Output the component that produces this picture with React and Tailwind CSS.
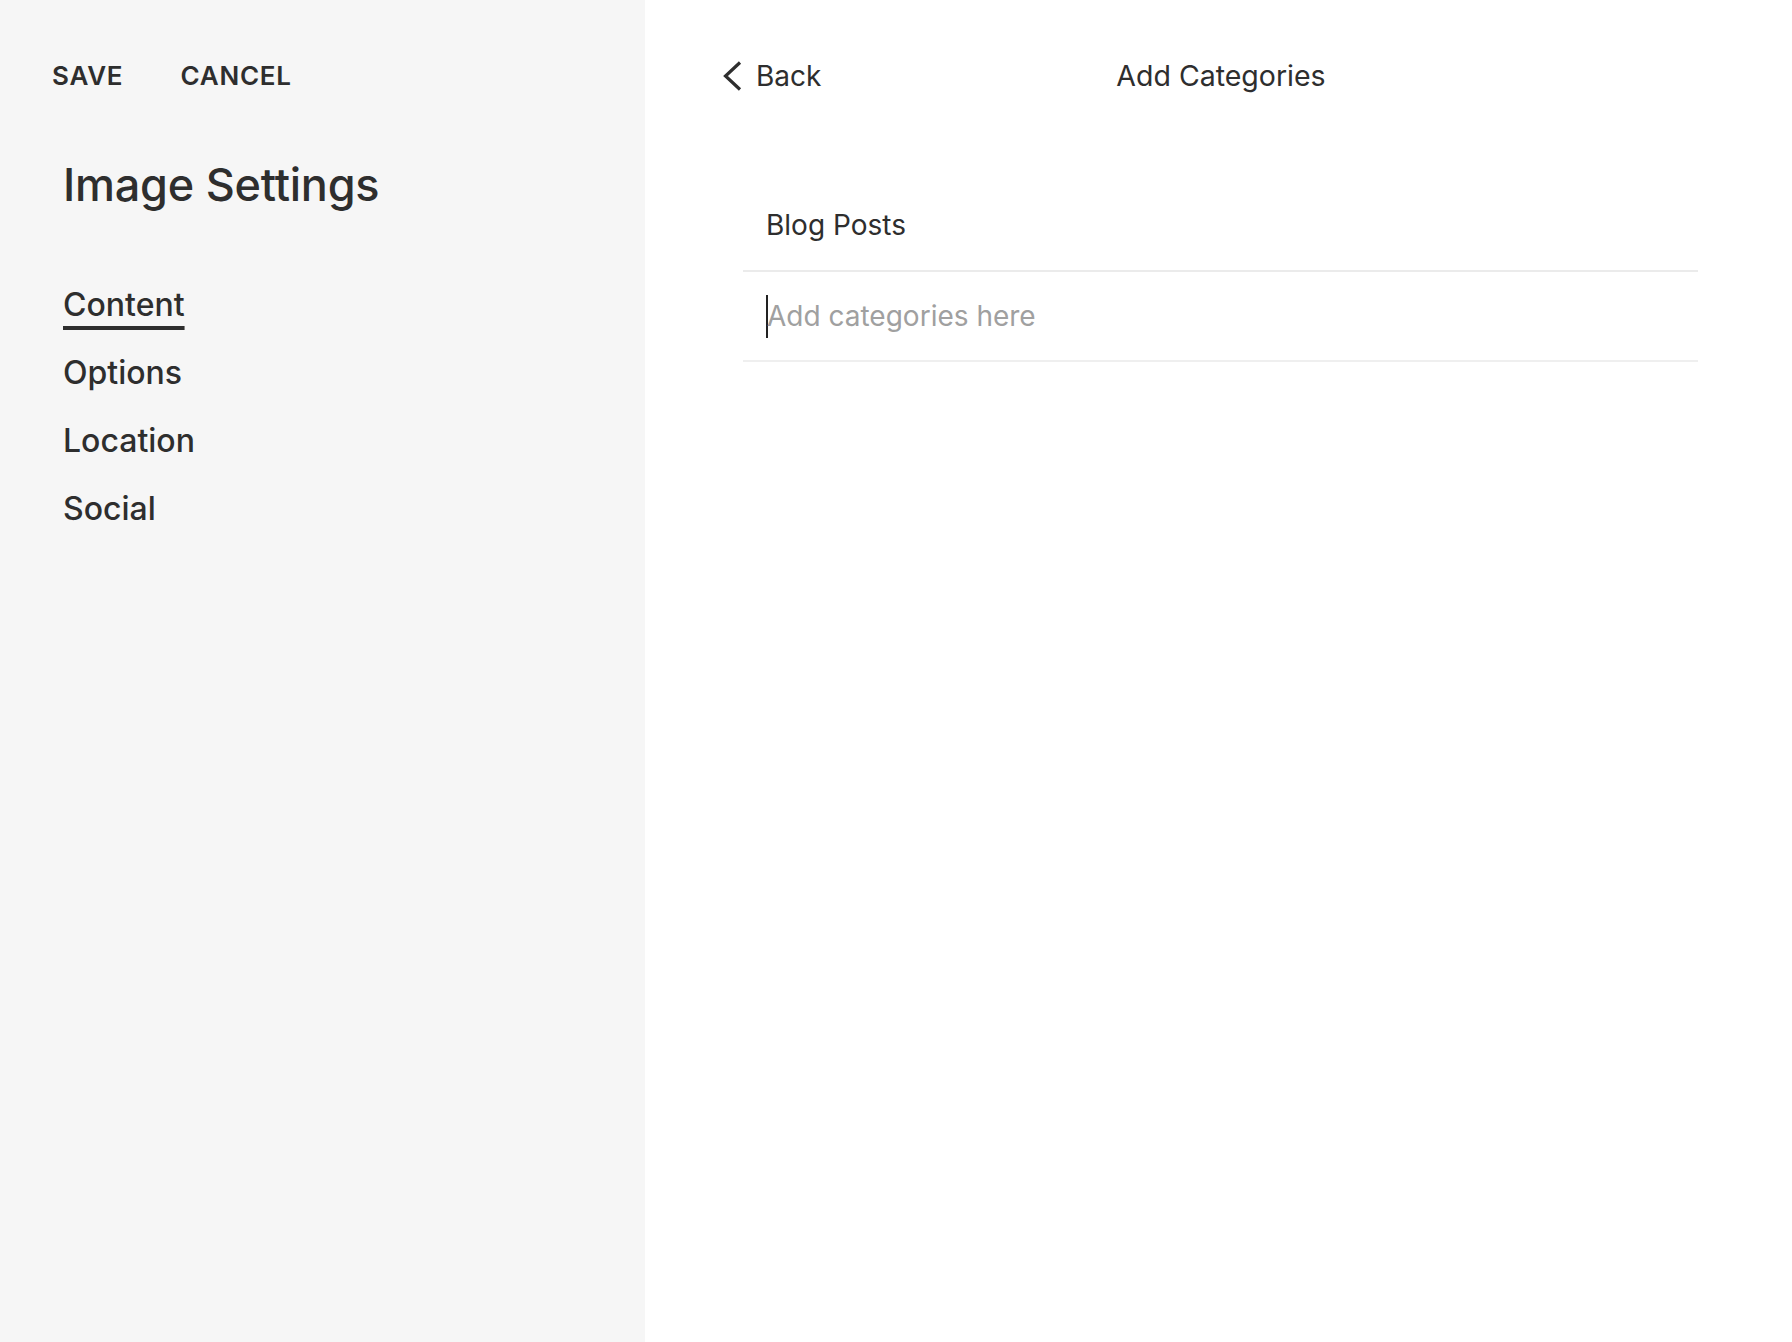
import React from "react";

export default function App() {
  return (
    <div className="flex w-full min-h-[1342px] h-screen text-[#2e2e2e] font-['Inter','Noto_Sans','Liberation_Sans',sans-serif]">
      {/* Left panel */}
      <aside className="w-[645px] shrink-0 bg-[#f6f6f6] flex flex-col">
        <div className="h-[150px] flex items-center pt-[2px] pl-[52px] gap-[57px]">
          <button className="text-[26px] font-semibold tracking-[0.03em] leading-none">SAVE</button>
          <button className="text-[26px] font-semibold tracking-[0.03em] leading-none">CANCEL</button>
        </div>
        <h1 className="mt-[8px] pl-[63px] text-[45px] font-medium leading-[54px] tracking-[-0.005em]">
          Image Settings
        </h1>
        <nav className="mt-[59px] pl-[63px] flex flex-col">
          <div className="h-[68px] flex items-center">
            <span className="text-[32px] font-medium leading-none underline decoration-4 underline-offset-[10px] decoration-[#2e2e2e]">
              Content
            </span>
          </div>
          <div className="h-[68px] flex items-center">
            <span className="text-[32px] font-medium leading-none">Options</span>
          </div>
          <div className="h-[68px] flex items-center">
            <span className="text-[32px] font-medium leading-none">Location</span>
          </div>
          <div className="h-[68px] flex items-center">
            <span className="text-[32px] font-medium leading-none">Social</span>
          </div>
        </nav>
      </aside>

      {/* Right panel */}
      <main className="flex-1 bg-white flex flex-col">
        <div className="h-[150px] grid grid-cols-3 items-center pt-[2px]">
          <div className="pl-[76px] flex items-center gap-[11px]">
            <svg width="24" height="32" viewBox="0 0 24 32" fill="none" className="shrink-0">
              <polyline points="19,2.5 4.5,16 19,29.5" stroke="#2e2e2e" strokeWidth="3.2" fill="none" />
            </svg>
            <span className="text-[28px] leading-none">Back</span>
          </div>
          <div className="pl-[5px] text-center text-[28.5px] leading-none whitespace-nowrap">Add Categories</div>
          <div />
        </div>
        <div className="mt-[30px] ml-[98px] w-[955px] flex flex-col">
          <div className="h-[92px] flex items-center pl-[23px] border-b-2 border-[#ebebeb]">
            <span className="text-[28px] leading-none">Blog Posts</span>
          </div>
          <div className="h-[90px] flex items-center pl-[23px] border-b-2 border-[#efefef]">
            <div className="w-[2px] h-[43px] bg-[#222] shrink-0" />
            <span className="-ml-[1px] text-[28px] leading-none text-[#a0a0a0]">Add categories here</span>
          </div>
        </div>
      </main>
    </div>
  );
}
